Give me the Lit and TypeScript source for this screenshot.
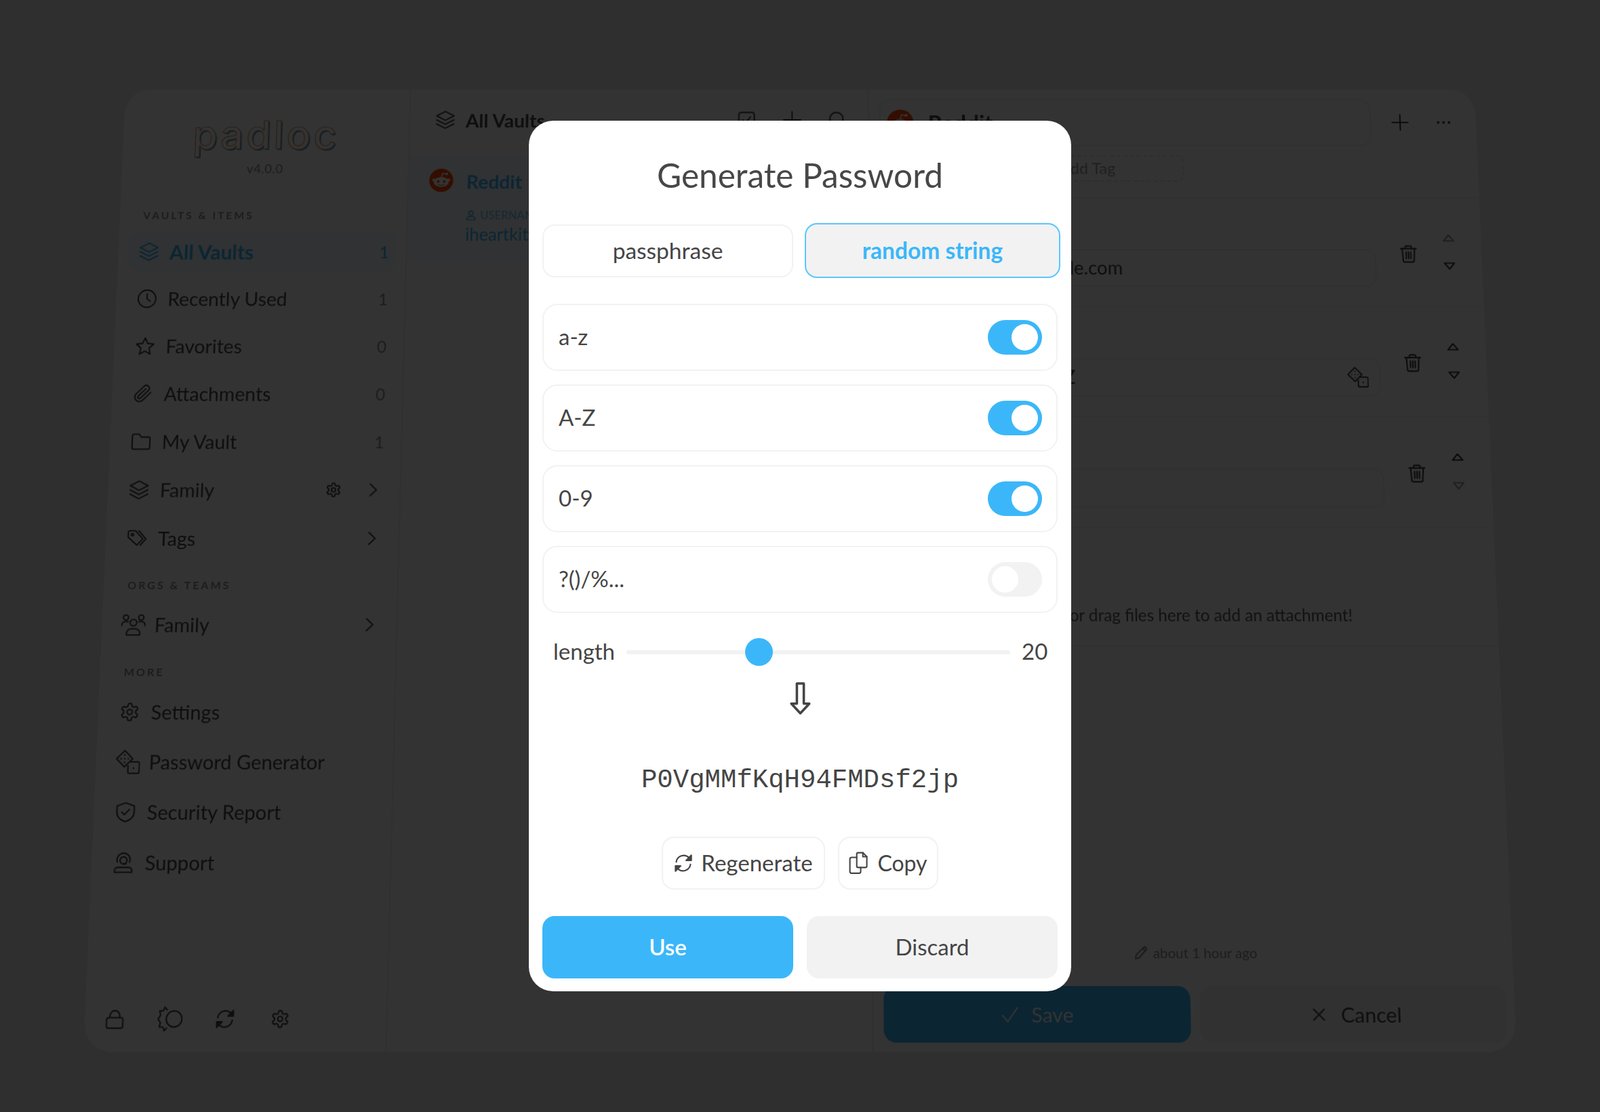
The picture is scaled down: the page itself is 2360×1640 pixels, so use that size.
import { LitElement, html, css, svg } from "lit";
import { customElement } from "lit/decorators.js";
import { classMap } from "lit/directives/class-map.js";

const gearPath =
  "M12.22 2h-.44a2 2 0 0 0-2 2v.18a2 2 0 0 1-1 1.73l-.43.25a2 2 0 0 1-2 0l-.15-.08a2 2 0 0 0-2.73.73l-.22.38a2 2 0 0 0 .73 2.73l.15.1a2 2 0 0 1 1 1.72v.51a2 2 0 0 1-1 1.74l-.15.09a2 2 0 0 0-.73 2.73l.22.38a2 2 0 0 0 2.73.73l.15-.08a2 2 0 0 1 2 0l.43.25a2 2 0 0 1 1 1.73V20a2 2 0 0 0 2 2h.44a2 2 0 0 0 2-2v-.18a2 2 0 0 1 1-1.73l.43-.25a2 2 0 0 1 2 0l.15.08a2 2 0 0 0 2.73-.73l.22-.39a2 2 0 0 0-.73-2.73l-.15-.08a2 2 0 0 1-1-1.74v-.5a2 2 0 0 1 1-1.74l.15-.09a2 2 0 0 0 .73-2.73l-.22-.38a2 2 0 0 0-2.73-.73l-.15.08a2 2 0 0 1-2 0l-.43-.25a2 2 0 0 1-1-1.73V4a2 2 0 0 0-2-2z";

const icons: Record<string, unknown> = {
  layers: svg`<path d="M12 1.500l10.500 5.500-10.500 5.500L1.500 7z"/><path d="M1.500 12l10.500 5.500 10.500-5.500"/><path d="M1.500 17l10.500 5.500 10.500-5.500"/>`,
  clock: svg`<circle cx="12" cy="12" r="10.500"/><path d="M12 6v6l4 3"/>`,
  star: svg`<path d="M12 2l3 6.700 7.300.800-5.400 5 1.500 7.200L12 18.100 5.600 21.700l1.500-7.200-5.400-5 7.300-.800z"/>`,
  clip: svg`<path d="M21 10.500l-9.300 9.300a5.500 5.500 0 0 1-7.800-7.800l9.300-9.300a3.700 3.700 0 0 1 5.200 5.200l-9.300 9.300a1.800 1.800 0 0 1-2.600-2.600l8.600-8.500"/>`,
  folder: svg`<path d="M1.500 5a2 2 0 0 1 2-2h6l2.500 3.500h8.500a2 2 0 0 1 2 2V19a2 2 0 0 1-2 2h-17a2 2 0 0 1-2-2z"/>`,
  gear: svg`<path d=${gearPath}/><circle cx="12" cy="12" r="3"/>`,
  chevron: svg`<path d="M8 2.500L18 12 8 21.500"/>`,
  tags: svg`<path d="M1.500 4.500A2 2 0 0 1 3.500 3h6.500l9 9.500-7 7.500-10.500-9.500z"/><path d="M14 3l8.500 9.500-6.500 7.500"/><circle cx="6.500" cy="7.500" r="1.300"/>`,
  users: svg`<circle cx="12" cy="10" r="3.200"/><path d="M5.500 22v-1.500A4.500 4.500 0 0 1 10 16h4a4.500 4.500 0 0 1 4.500 4.500V22z"/><circle cx="4.500" cy="5" r="2.500"/><circle cx="19.500" cy="5" r="2.500"/><path d="M.5 13v-.5A3.500 3.500 0 0 1 4 9h3M23.500 13v-.5A3.500 3.500 0 0 0 20 9h-3"/>`,
  dice: svg`<path d="M1.200 9L9 1.200 16.800 9 9 16.800z"/><path d="M15 12h7a1.500 1.500 0 0 1 1.500 1.500v8a1.500 1.500 0 0 1-1.500 1.500h-8a1.500 1.500 0 0 1-1.500-1.500v-6"/><g fill="currentColor" stroke="none"><circle cx="9" cy="5.500" r=".8"/><circle cx="5.500" cy="9" r=".8"/><circle cx="9" cy="9" r=".8"/><circle cx="12.500" cy="9" r=".8"/><circle cx="9" cy="12.500" r=".8"/><circle cx="18" cy="18" r=".9"/></g>`,
  shield: svg`<path d="M12 1.500l10 3.500v7c0 5.500-4 9-10 11C6 21 2 17.500 2 12V5z"/><path d="M7.500 12l3.200 3 5.800-6"/>`,
  support: svg`<path d="M5 11.500a7.500 7.500 0 1 1 14 0"/><circle cx="12" cy="9.500" r="4"/><path d="M2 23v-2a3.500 3.500 0 0 1 3.500-3.500h13A3.500 3.500 0 0 1 22 21v2z"/><path d="M12 13.500h3"/>`,
  lock: svg`<rect x="2" y="10.500" width="20" height="12.500" rx="2.500"/><path d="M6 10.500V8a6 6 0 0 1 12 0v2.500"/>`,
  theme: svg`<ellipse cx="16" cy="12" rx="7.500" ry="7.500"/><path d="M9 3.500L6.800 1 5.500 4.500 2 4.500l1 4L.7 12 3 15.500l-1 4 3.500 0 1.300 3.500L9 20.500"/>`,
  refresh: svg`<path d="M3 10.500A9.500 9.500 0 0 1 19 5l2.500 2.500"/><path d="M21 13.500A9.500 9.500 0 0 1 5 19l-2.500-2.500"/><path d="M22 2v6.500h-6.500z" fill="currentColor"/><path d="M2 22v-6.500h6.500z" fill="currentColor"/>`,
  trash: svg`<path d="M2 5.500h20"/><path d="M8 5.500V3.500A1.500 1.500 0 0 1 9.500 2h5A1.500 1.500 0 0 1 16 3.500v2"/><path d="M4 5.500l1 15.500a2 2 0 0 0 2 2h10a2 2 0 0 0 2-2l1-15.500"/><path d="M9 10v8.500M12 10v8.500M15 10v8.500"/>`,
  up: svg`<path d="M12 6l10 12H2z"/>`,
  down: svg`<path d="M12 18L2 6h20z"/>`,
  plus: svg`<path d="M12 1v22M1 12h22"/>`,
  dots: svg`<circle cx="3" cy="12" r="1" fill="currentColor"/><circle cx="12" cy="12" r="1" fill="currentColor"/><circle cx="21" cy="12" r="1" fill="currentColor"/>`,
  pencil: svg`<path d="M18 2l4 4L8 21l-6 1.500L3.500 16z"/><path d="M15 5l4 4"/>`,
  check: svg`<path d="M2 13l7 8L22 3"/>`,
  close: svg`<path d="M3 3l18 18M21 3L3 21"/>`,
  user: svg`<circle cx="12" cy="7" r="5"/><path d="M3 23v-3a5 5 0 0 1 5-5h8a5 5 0 0 1 5 5v3z"/>`,
  checkbox: svg`<rect x="2" y="2" width="20" height="20" rx="3"/><path d="M7 12l3.500 4L17 8"/>`,
  search: svg`<circle cx="10.500" cy="10.500" r="8.500"/><path d="M17 17l6 6"/>`,
  arrow: svg`<path d="M19 3h10v29h8L24 46 11 32h8z"/>`,
  copy: svg`<path d="M11 3.500a2 2 0 0 1 2-2h6.500L25 7v13a2 2 0 0 1-2 2H13a2 2 0 0 1-2-2z"/><path d="M19.500 1.500V7H25"/><path d="M11 8H4a2.500 2.500 0 0 0-2.500 2.500v17A2.500 2.500 0 0 0 4 30h10a2.500 2.500 0 0 0 2.500-2.500V22"/>`,
};

const icon = (name: string, size = 30, box = 24) => html`<svg
  class="icon"
  width=${size}
  height=${size}
  viewBox="0 0 ${box} ${box}"
  fill="none"
  stroke="currentColor"
  stroke-width=${(box / size) * 2.1}
  stroke-linecap="round"
  stroke-linejoin="round"
>
  ${icons[name]}
</svg>`;

const vaultItems = [
  { name: "All Vaults", icon: "layers", count: "1", active: true },
  { name: "Recently Used", icon: "clock", count: "1" },
  { name: "Favorites", icon: "star", count: "0" },
  { name: "Attachments", icon: "clip", count: "0" },
  { name: "My Vault", icon: "folder", count: "1" },
  { name: "Family", icon: "layers", gear: true, chevron: true },
  { name: "Tags", icon: "tags", chevron: true },
];
const moreItems = [
  { name: "Settings", icon: "gear" },
  { name: "Password Generator", icon: "dice", wide: true },
  { name: "Security Report", icon: "shield" },
  { name: "Support", icon: "support" },
];
const fields = [
  { label: "Username", value: "iheartkittens@example.com", end: 363, upOff: true },
  { label: "Password", value: "Ft7xKq9LmZ", end: 289, dice: true },
  { label: "URL", value: "", end: 100, downOff: true },
];
const toggles = [
  { label: "a-z", on: true },
  { label: "A-Z", on: true },
  { label: "0-9", on: true },
  { label: "?()/%...", on: false },
];
const length = { value: 20, min: 5, max: 50 };

@customElement("app-root")
export class AppRoot extends LitElement {
  static styles = css`
    :host {
      display: block;
      position: relative;
      width: 2360px;
      height: 1640px;
      overflow: hidden;
      font-family: Lato, "Noto Sans", sans-serif;
      color: #454545;
    }
    * {
      box-sizing: border-box;
    }
    .icon {
      display: block;
      flex: none;
    }
    .stage {
      height: 100%;
      background: #e8e8e8;
      display: flex;
      align-items: center;
      justify-content: center;
      perspective: 1000px;
    }
    .window {
      width: 2050px;
      height: 1420px;
      background: #fff;
      border-radius: 40px;
      display: flex;
      transform: rotateX(2.45deg);
      overflow: hidden;
    }
    .sidebar {
      width: 434px;
      flex: none;
      border-right: 2px solid #f0f0f0;
      padding: 0 14px;
      display: flex;
      flex-direction: column;
    }
    .logo {
      height: 113px;
      padding-top: 36px;
      text-align: center;
      font-size: 61px;
      line-height: 70px;
      letter-spacing: 4px;
      font-family: Inter, sans-serif;
      font-weight: 500;
      color: #fff;
      -webkit-text-stroke: 1.2px #d9905f;
      text-shadow: 2px 2px 0 #4aa5d0;
    }
    .version {
      text-align: center;
      font-size: 19px;
      height: 32px;
      line-height: 22px;
      color: #8a8a8a;
      letter-spacing: 0.5px;
    }
    .section {
      font-size: 16px;
      font-weight: 700;
      letter-spacing: 3px;
      color: #8c8c8c;
      padding-left: 21px;
      line-height: 30px;
    }
    .section.first {
      margin-top: 36px;
      height: 41px;
    }
    .section.next {
      margin-top: 24px;
      height: 43px;
    }
    .nav {
      display: flex;
      flex-direction: column;
      gap: 12px;
    }
    .row {
      height: 60px;
      display: flex;
      align-items: center;
      padding: 0 11px 0 17px;
      gap: 16px;
      border-radius: 16px;
      font-size: 28.700px;
    }
    .row.active {
      background: #eff8fe;
      color: #3bb7f9;
      font-weight: 700;
      font-size: 30.500px;
    }
    .row .name {
      flex: 1;
    }
    .wide {
      margin: 0 -3px 0 -3px;
    }
    .count {
      font-size: 25px;
      color: #8d8d8d;
    }
    .row.active .count {
      color: #3bb7f9;
      font-weight: 400;
    }
    .muted {
      margin-right: 19px;
    }
    .chev {
      margin-right: 4px;
    }
    .tools {
      margin-top: auto;
      margin-bottom: 28px;
      display: flex;
      align-items: center;
      gap: 51px;
      padding-left: 15px;
    }
    .tools .wide {
      margin: 0 -4px;
    }
    .list {
      width: 696px;
      flex: none;
      border-right: 2px solid #f0f0f0;
    }
    .list-head {
      height: 96px;
      display: flex;
      align-items: center;
      padding-left: 38px;
      font-size: 29px;
      font-weight: 700;
    }
    .list-head .title {
      margin-left: 16px;
      width: 412px;
    }
    .head-tools {
      display: flex;
      gap: 41px;
    }
    .list-item {
      height: 162px;
      margin-top: 8px;
      background: #eff8fe;
      display: flex;
      padding: 20px 0 0 31px;
      gap: 20px;
    }
    .reddit {
      flex: none;
      display: block;
    }
    .list-item .item-name {
      font-size: 29px;
      font-weight: 700;
      line-height: 40px;
      color: #3bb7f9;
    }
    .tag-line {
      display: flex;
      align-items: center;
      gap: 6px;
      font-size: 17px;
      color: #6cc3f3;
      margin-top: 21px;
    }
    .user-value {
      font-size: 26px;
      color: #3bb7f9;
      margin-top: 3px;
    }
    .detail {
      flex: 1;
      padding: 15px 12px 13px 15px;
      display: flex;
      flex-direction: column;
      min-width: 0;
    }
    .detail-head {
      display: flex;
      align-items: center;
      height: 74px;
    }
    .name-input {
      width: 746px;
      height: 74px;
      border: 2px solid #f0f0f0;
      border-radius: 18px;
      display: flex;
      align-items: center;
      padding-left: 10px;
      gap: 22px;
      font-size: 34px;
      font-weight: 700;
    }
    .detail-tools {
      display: flex;
      gap: 42px;
      margin-left: 31px;
      align-items: center;
      color: #333;
    }
    .tags {
      height: 82px;
      padding-top: 14px;
      border-bottom: 2px solid #f2f2f2;
      margin: 0 -12px 0 -15px;
      padding-left: 15px;
    }
    .add-tag {
      width: 460px;
      height: 41px;
      border: 2px dashed #e4e4e4;
      border-radius: 10px;
      font-size: 24px;
      color: #9a9a9a;
      text-align: right;
      padding-right: 101px;
      line-height: 36px;
    }
    .field {
      height: 166px;
      border-bottom: 2px solid #f2f2f2;
      margin: 0 -12px 0 -15px;
      padding: 77px 0 0 15px;
      display: flex;
      position: relative;
    }
    .value-box {
      width: 746px;
      height: 58px;
      border: 2px solid #f0f0f0;
      border-radius: 16px;
      display: flex;
      align-items: center;
      justify-content: space-between;
      padding-right: 16px;
      font-size: 28px;
      color: #444;
    }
    .value {
      text-align: right;
      white-space: nowrap;
      padding-bottom: 2px;
    }
    .field-label {
      position: absolute;
      left: 24px;
      top: 30px;
      font-size: 18px;
      color: #8c8c8c;
    }
    .trash {
      margin: -7px 0 0 35px;
      color: #3a3a3a;
    }
    .move {
      margin: -26px 0 0 38px;
      display: flex;
      flex-direction: column;
      gap: 25px;
      color: #3a3a3a;
    }
    .move .off {
      color: #999;
    }
    .attach {
      height: 94px;
      border-bottom: 2px solid #f2f2f2;
      margin: 80px -12px 0 -15px;
      padding-right: 213px;
      padding-top: 2px;
      display: flex;
      align-items: center;
      justify-content: flex-end;
      font-size: 24.200px;
      color: #555;
    }
    .stamp {
      margin-top: auto;
      margin-bottom: 35px;
      display: flex;
      align-items: center;
      gap: 7px;
      padding-left: 361px;
      font-size: 20px;
      color: #8a8a8a;
    }
    .detail-actions {
      display: flex;
      gap: 13px;
    }
    .detail-actions div {
      width: 440px;
      height: 79px;
      border-radius: 18px;
      display: flex;
      align-items: center;
      justify-content: center;
      gap: 18px;
      font-size: 29.500px;
    }
    .save {
      background: #3bb7f9;
      color: #fff;
    }
    .detail-actions .cancel {
      background: #f4f4f4;
      gap: 21px;
      padding-left: 11px;
    }

    .scrim {
      position: absolute;
      inset: 0;
      background: rgba(0, 0, 0, 0.8);
      display: flex;
      align-items: center;
      justify-content: center;
    }
    .dialog {
      width: 800px;
      height: 1284px;
      background: #fff;
      border-radius: 36px;
      padding: 0 20px 19px;
      display: flex;
      flex-direction: column;
    }
    h1 {
      margin: 0;
      height: 153px;
      padding-top: 50px;
      font-size: 49.500px;
      line-height: 60px;
      font-weight: 400;
      text-align: center;
      color: #474747;
    }
    .tabs {
      display: grid;
      grid-template-columns: 370px 370px;
      gap: 20px;
    }
    .tab {
      height: 78px;
      border: 2px solid #f2f2f2;
      border-radius: 18px;
      display: flex;
      align-items: center;
      justify-content: center;
      padding-bottom: 2px;
      font-size: 33.500px;
    }
    .tab.active {
      margin: -2px -4px -1px -3px;
      background: #f2f2f2;
      border-color: #59c6ff;
      color: #3bb7f9;
      font-weight: 700;
      height: 81px;
    }
    .toggles {
      margin-top: 39px;
      display: flex;
      flex-direction: column;
      gap: 20px;
    }
    .toggle-row {
      height: 99px;
      border: 2px solid #f2f2f2;
      border-radius: 22px;
      display: flex;
      align-items: center;
      justify-content: space-between;
      padding: 0 21px 0 22px;
      font-size: 33px;
    }
    .toggle-row span {
      margin-bottom: 3px;
    }
    .switch {
      width: 80px;
      height: 51px;
      border-radius: 26px;
      background: #f2f2f2;
      padding: 6px;
    }
    .switch.on {
      background: #3bb7f9;
      padding-left: 35px;
    }
    .knob {
      width: 39px;
      height: 39px;
      border-radius: 50%;
      background: #fff;
    }
    .slider {
      height: 58px;
      margin-top: 29px;
      display: flex;
      align-items: center;
      padding: 0 16px;
      font-size: 33px;
    }
    .slider span {
      margin-bottom: 4px;
    }
    .slider-label {
      width: 108px;
      flex: none;
    }
    .track {
      width: 566px;
      height: 6px;
      border-radius: 3px;
      background: #f2f2f2;
      position: relative;
      flex: none;
    }
    .thumb {
      position: absolute;
      top: -18px;
      width: 41px;
      height: 41px;
      border-radius: 50%;
      background: #3bb7f9;
    }
    .slider-value {
      margin-left: 17px;
    }
    .arrow {
      margin: 14px auto 0;
      color: #444;
    }
    .arrow svg {
      stroke-width: 3.500;
    }
    .password {
      margin-top: 69px;
      height: 56px;
      line-height: 56px;
      text-align: center;
      font-family: "Liberation Mono", monospace;
      font-size: 39px;
      color: #454545;
    }
    .pw-actions {
      margin-top: 55px;
      display: flex;
      justify-content: center;
      gap: 19px;
    }
    .ghost {
      width: 241px;
      height: 78px;
      border: 2px solid #f2f2f2;
      border-radius: 18px;
      display: flex;
      align-items: center;
      justify-content: center;
      gap: 12px;
      padding-bottom: 2px;
      font-size: 33px;
    }
    .ghost .icon {
      margin-top: 2px;
    }
    .ghost.copy {
      width: 148px;
      gap: 8px;
      font-size: 32px;
    }
    .choices {
      margin-top: auto;
      display: grid;
      grid-template-columns: 370px 370px;
      gap: 20px;
    }
    .choice {
      height: 92px;
      border-radius: 18px;
      display: flex;
      align-items: center;
      justify-content: center;
      padding-bottom: 2px;
      font-size: 33px;
      background: #f2f2f2;
    }
    .choice.primary {
      background: #3bb7f9;
      color: #fff;
      font-weight: 600;
    }
  `;

  private reddit(size: number) {
    return html`<svg class="reddit" width=${size} height=${size} viewBox="0 0 40 40">
      <circle cx="20" cy="20" r="20" fill="#ff4500" />
      <ellipse cx="20" cy="23" rx="12.500" ry="8.500" fill="#fff" />
      <circle cx="7.500" cy="19.500" r="2.500" fill="#fff" />
      <circle cx="32.500" cy="19.500" r="2.500" fill="#fff" />
      <path d="M20 15l2-7 6 1.500" fill="none" stroke="#fff" stroke-width="1.600" />
      <circle cx="29" cy="9" r="2.200" fill="#fff" />
      <circle cx="15" cy="22" r="2.200" fill="#ff4500" />
      <circle cx="25" cy="22" r="2.200" fill="#ff4500" />
      <path d="M14.500 27c3 2 8 2 11 0" fill="none" stroke="#ff4500" stroke-width="1.500" />
    </svg>`;
  }

  private renderRow(r: any) {
    return html`<div class=${classMap({ row: true, active: !!r.active })}>
      ${r.wide ? html`<span class="wide">${icon(r.icon, 36)}</span>` : icon(r.icon)}
      <span class="name">${r.name}</span>
      ${r.gear ? html`<span class="muted">${icon("gear", 24)}</span>` : ""}
      ${r.count ? html`<span class="count">${r.count}</span>` : ""}
      ${r.chevron ? html`<span class="chev">${icon("chevron", 22)}</span>` : ""}
    </div>`;
  }

  private renderSidebar() {
    return html`<aside class="sidebar">
      <div class="logo">padloc</div>
      <div class="version">v4.0.0</div>
      <div class="section first">VAULTS &amp; ITEMS</div>
      <div class="nav">${vaultItems.map((r) => this.renderRow(r))}</div>
      <div class="section next">ORGS &amp; TEAMS</div>
      <div class="nav">
        ${this.renderRow({ name: "Family", icon: "users", chevron: true, wide: true })}
      </div>
      <div class="section next">MORE</div>
      <div class="nav">${moreItems.map((r) => this.renderRow(r))}</div>
      <div class="tools">
        ${icon("lock", 28)}<span class="wide">${icon("theme", 36)}</span>${icon("refresh", 28)}${icon("gear", 28)}
      </div>
    </aside>`;
  }

  private renderList() {
    return html`<section class="list">
      <div class="list-head">
        ${icon("layers")}
        <span class="title">All Vaults</span>
        <div class="head-tools">
          ${icon("checkbox", 28)}${icon("plus", 28)}${icon("search", 28)}
        </div>
      </div>
      <div class="list-item">
        ${this.reddit(36)}
        <div>
          <div class="item-name">Reddit</div>
          <div class="tag-line">${icon("user", 16)} USERNAME</div>
          <div class="user-value">iheartkittens@example.com</div>
        </div>
      </div>
    </section>`;
  }

  private renderDetail() {
    return html`<section class="detail">
      <div class="detail-head">
        <div class="name-input">${this.reddit(40)} Reddit</div>
        <div class="detail-tools">${icon("plus", 26)}${icon("dots", 22)}</div>
      </div>
      <div class="tags"><div class="add-tag">Add Tag</div></div>
      ${fields.map(
        (f) => html`<div class="field">
          <span class="field-label">${f.label}</span>
          <div class="value-box">
            <span class="value" style="width:${f.end}px">${f.value}</span>
            ${f.dice ? icon("dice", 32) : ""}
          </div>
          <div class="trash">${icon("trash", 28)}</div>
          <div class="move">
            <span class=${classMap({ off: !!f.upOff })}>${icon("up", 18)}</span>
            <span class=${classMap({ off: !!f.downOff })}>${icon("down", 18)}</span>
          </div>
        </div>`
      )}
      <div class="attach">or drag files here to add an attachment!</div>
      <div class="stamp">${icon("pencil", 20)} about 1 hour ago</div>
      <div class="detail-actions">
        <div class="save">${icon("check", 26)} Save</div>
        <div class="cancel">${icon("close", 20)} Cancel</div>
      </div>
    </section>`;
  }

  private renderDialog() {
    const ratio = (length.value - length.min) / (length.max - length.min);
    return html`<div class="dialog">
      <h1>Generate Password</h1>
      <div class="tabs">
        <div class="tab">passphrase</div>
        <div class="tab active">random string</div>
      </div>
      <div class="toggles">
        ${toggles.map(
          (t) => html`<div class="toggle-row">
            <span>${t.label}</span>
            <div class=${classMap({ switch: true, on: t.on })}><div class="knob"></div></div>
          </div>`
        )}
      </div>
      <div class="slider">
        <span class="slider-label">length</span>
        <div class="track">
          <div class="thumb" style="left:${(566 - 41) * ratio}px"></div>
        </div>
        <span class="slider-value">${length.value}</span>
      </div>
      <div class="arrow">${icon("arrow", 49, 48)}</div>
      <div class="password">P0VgMMfKqH94FMDsf2jp</div>
      <div class="pw-actions">
        <div class="ghost">${icon("refresh", 28)} Regenerate</div>
        <div class="ghost copy">${icon("copy", 34, 32)} Copy</div>
      </div>
      <div class="choices">
        <div class="choice primary">Use</div>
        <div class="choice">Discard</div>
      </div>
    </div>`;
  }

  render() {
    return html`
      <div class="stage">
        <div class="window">
          ${this.renderSidebar()} ${this.renderList()} ${this.renderDetail()}
        </div>
      </div>
      <div class="scrim">${this.renderDialog()}</div>
    `;
  }
}
